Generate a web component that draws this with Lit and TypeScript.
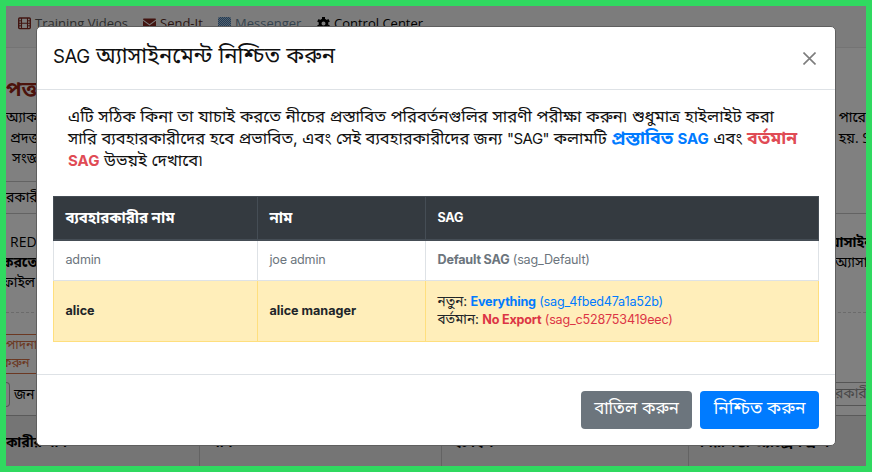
import { LitElement, html, css } from "lit";
import { customElement } from "lit/decorators.js";

@customElement("page-behind")
class PageBehind extends LitElement {
  static styles = css`
    :host { display: flex; flex-direction: column; height: 460px; overflow: hidden; background: #808080; color: #000;
      font: 14px/20px "Open Sans", "Noto Sans Bengali", "Noto Sans", sans-serif; white-space: nowrap; }
    nav { display: flex; height: 42px; box-sizing: border-box; flex: none; background: #7c7c7c; border-bottom: 1px solid #747474; padding: 7px 0 0 12px; font-size: 13px; }
    nav span { display: flex; align-items: center; height: 20px; }
    nav svg { margin-right: 4px; flex: none; }
    .videos { width: 125px; color: #2c2c2c; }
    .send { width: 75px; color: #2c1512; }
    .messenger { width: 99px; color: #34434f; }
    .row { display: flex; justify-content: space-between; flex: none; box-sizing: border-box; }
    .left { width: 40px; }
    .right { width: 31px; }
    .title { height: 59px; padding-top: 30px; color: #4c130c; font-size: 21px; font-weight: bold; }
    .line { height: 20px; }
    .first { height: 21px; }
    .in4 { padding-left: 4px; }
    .in6 { padding-left: 6px; }
    .out { margin-left: -4px; }
    .tabs { height: 33px; margin-top: 13px; padding-top: 6px; border-bottom: 1px solid #636363; }
    .tabs .left { border-top: 1px solid #636363; margin-top: -6px; padding-top: 5px; }
    .gap { height: 18px; flex: none; }
    .dots { height: 20px; border-bottom: 1px dashed #6b6b6b; flex: none; }
    .note { height: 40px; margin-top: 21px; color: #6b3822; font-size: 13px; line-height: 18px; flex: none; width: 40px; box-sizing: border-box; border: solid #6b3822; border-width: 1px 0; }
    .note .out { margin-left: -5px; }
    .controls { height: 41px; padding-top: 8px; }
    .controls .left { display: flex; line-height: 23px; }
    .num { width: 4px; height: 25px; box-sizing: border-box; border: 1px solid #555; border-left: 0; border-radius: 0 4px 4px 0; margin-right: 4px; }
    .search { border-top: 1px solid #555; height: 24px; border-bottom: 1px solid #555; color: #4a4a4a; box-sizing: border-box; line-height: 20px; }
    .grid { display: grid; grid-template-columns: 194px 242px 247px 1fr; height: 60px; border-top: 1px solid #5a5a5a; background: #757575; font-weight: bold; flex: none; }
    .grid div { border-right: 1px solid #636363; padding: 16px 0 0; text-indent: 11px; }
    .grid div:last-child { border: 0; }
    .grid .cut { text-indent: -41px; }
  `;
  render() {
    return html`
      <nav>
        <span class="videos"><svg width="13" height="13" viewBox="0 0 13 13" fill="none" stroke="#421410"><rect x=".7" y="1" width="11.6" height="10.6" rx="1" stroke-width="1.4"/><path d="M3.5 1v11M9.5 1v11M3.5 6.3h6" stroke-width="1.1"/><path d="M1 3.8h2.5M1 6.3h2.5M1 8.8h2.5M9.5 3.8H12M9.5 6.3H12M9.5 8.8H12"/></svg>Training Videos</span>
        <span class="send"><svg width="13" height="13" viewBox="0 0 13 13" fill="#421410"><path d="M0 2.5C0 2 .5 1.5 1.2 1.5h10.6c.7 0 1.2.5 1.2 1L6.5 7.3z"/><path d="M0 3.8l6.5 4.700L13 3.800v6.700c0 .7-.5 1.200-1.200 1.200H1.200C.5 11.700 0 11.200 0 10.500z"/></svg>Send-It</span>
        <span class="messenger"><svg width="13" height="13" viewBox="0 0 13 13"><defs><pattern id="weave" width="2" height="2" patternUnits="userSpaceOnUse"><rect width="2" height="2" fill="#54616e"/><rect width="1" height="1" fill="#223c56"/><rect x="1" y="1" width="1" height="1" fill="#223c56"/></pattern></defs><rect width="13" height="12" rx="1.500" fill="url(#weave)"/></svg>Messenger</span>
        <span><svg width="13" height="13" viewBox="0 0 13 13"><circle cx="6.500" cy="6.500" r="3.400" fill="none" stroke="#000" stroke-width="2.800"/><path d="M6.500 0v2M6.500 11v2M.9 3.250l1.700 1M10.400 8.750l1.700 1M.9 9.750l1.700-1M10.400 4.250l1.700-1" stroke="#000" stroke-width="3"/></svg>Control Center</span>
      </nav>
      <div class="row title"><div class="left">পত্ত</div></div>
      <div class="row first"><div class="left">অ্যাক</div><div class="right">&nbsp;পারে</div></div>
      <div class="row line"><div class="left in4">প্রদত্ত</div><div class="right">&nbsp;হয়. SAG</div></div>
      <div class="row line"><div class="left in6">সংজ্ঞ</div></div>
      <div class="row tabs"><div class="left">রকারী</div></div>
      <div class="gap"></div>
      <div class="row line"><div class="left in4">REDC</div><div class="right"><b class="out">যাসাইন</b></div></div>
      <div class="row line"><div class="left"><b class="out">করতে</b></div><div class="right">অ্যাসাইন</div></div>
      <div class="row line"><div class="left"><span class="out">ফাইল</span></div></div>
      <div class="dots"></div>
      <div class="note"><div>পাদনা</div><div class="out">করুন</div></div>
      <div class="row controls"><div class="left"><i class="num"></i>জন</div><div class="right search">রকারী</div></div>
      <div class="grid"><div class="cut">ব্যবহারকারীর নাম</div><div>নাম</div><div>ইমেইল</div><div>নিরাপত্তা অ্যাক্সেস গ্রুপ</div></div>
    `;
  }
}

@customElement("app-root")
class AppRoot extends LitElement {
  static styles = css`
    :host { display: block; position: relative; width: 872px; height: 472px; box-sizing: border-box; border: 6px solid #30d960; overflow: hidden;
      font-family: Inter, "Noto Sans Bengali", "Noto Sans", sans-serif; color: #212529; }
    .dialog { position: absolute; left: 30px; top: 20px; width: 800px; height: 420px; box-sizing: border-box; border: 1px solid #5f5f5f; border-radius: 5px; background: #fff; display: flex; flex-direction: column; }
    header { display: flex; justify-content: space-between; height: 63px; box-sizing: border-box; border-bottom: 1px solid #dee2e6; padding: 13px 19px 0 16px; flex: none; }
    h1 { margin: 0; font-size: 22.1px; line-height: 30px; font-weight: 400; color: #111; white-space: nowrap; }
    h1 span { font-size: 18.6px; letter-spacing: -.4px; }
    header svg { margin-top: 12px; }
    .intro { margin: 15px 0 0 31px; font-size: 16.65px; line-height: 22px; height: 67px; color: #111; white-space: nowrap; }
    .intro div { height: 22px; }
    .intro .second { font-size: 16.45px; }
    .second b { font-size: 17.7px; }
    .intro .sag { font-size: 15px; }
    .second .sag:not(b .sag) { letter-spacing: -.5px; }
    .new { color: #007bff; }
    .old { color: #dc3545; }
    .intro .old { color: #e04b55; }
    table { border-collapse: collapse; table-layout: fixed; width: 766px; margin: 24px 0 0 16px; font-size: 12.6px; line-height: 18px; letter-spacing: -.2px; }
    th, td { padding: 0 11.5px; text-align: left; border: 1px solid #dee2e6; box-sizing: border-box; white-space: nowrap; }
    th { background: #343a40; color: #fff; border-color: #454d55; border-bottom-width: 2px; height: 43px; }
    th.bn { font-size: 15px; letter-spacing: 0; }
    td { height: 41px; color: #6c757d; }
    .hit td { height: 61px; background: #ffeeba; border-color: #ffdf7e; color: #212529; }
    .hit td:not(:last-child) { font-weight: bold; letter-spacing: 0; }
    .tag { font-size: 13.5px; letter-spacing: 0; line-height: 1; }
    .user { width: 204px; }
    .name { width: 168px; }
    footer { margin-top: auto; height: 71px; box-sizing: border-box; border-top: 1px solid #dee2e6; display: flex; justify-content: flex-end; gap: 8px; padding: 16px 16px 0 0; }
    button { height: 38px; border: 0; border-radius: 4px; padding: 0 0 4px; background: #6c757d; color: #fff; font: 16.8px/24px Inter, "Noto Sans Bengali", sans-serif; width: 111px; white-space: nowrap; }
    button.go { width: 119px; background: #007bff; font-size: 17.4px; }
  `;
  render() {
    return html`
      <page-behind></page-behind>
      <section class="dialog">
        <header><h1><span>SAG</span> অ্যাসাইনমেন্ট নিশ্চিত করুন</h1>
          <svg width="13" height="13" viewBox="0 0 13 13" stroke="#7d7d7d" stroke-width="1.6"><path d="M.5.5l12 12M12.500.5l-12 12"/></svg></header>
        <div class="intro">
          <div>এটি সঠিক কিনা তা যাচাই করতে নীচের প্রস্তাবিত পরিবর্তনগুলির সারণী পরীক্ষা করুন৷ শুধুমাত্র হাইলাইট করা</div>
          <div class="second">সারি ব্যবহারকারীদের হবে প্রভাবিত, এবং সেই ব্যবহারকারীদের জন্য <span class="sag">"SAG"</span> কলামটি <b class="new">প্রস্তাবিত <span class="sag">SAG</span></b> এবং <b class="old">বর্তমান</b></div>
          <div><b class="old sag">SAG</b> উভয়ই দেখাবে৷</div>
        </div>
        <table>
          <colgroup><col class="user"><col class="name"><col></colgroup>
          <tr><th class="bn">ব্যবহারকারীর নাম</th><th class="bn">নাম</th><th>SAG</th></tr>
          <tr><td>admin</td><td>joe admin</td><td><b>Default SAG</b> (sag_Default)</td></tr>
          <tr class="hit"><td>alice</td><td>alice manager</td><td><span class="tag">নতুন:</span> <span class="new"><b>Everything</b> (sag_4fbed47a1a52b)</span><br><span class="tag">বর্তমান:</span> <span class="old"><b>No Export</b> (sag_c528753419eec)</span></td></tr>
        </table>
        <footer><button>বাতিল করুন</button><button class="go">নিশ্চিত করুন</button></footer>
      </section>
    `;
  }
}
